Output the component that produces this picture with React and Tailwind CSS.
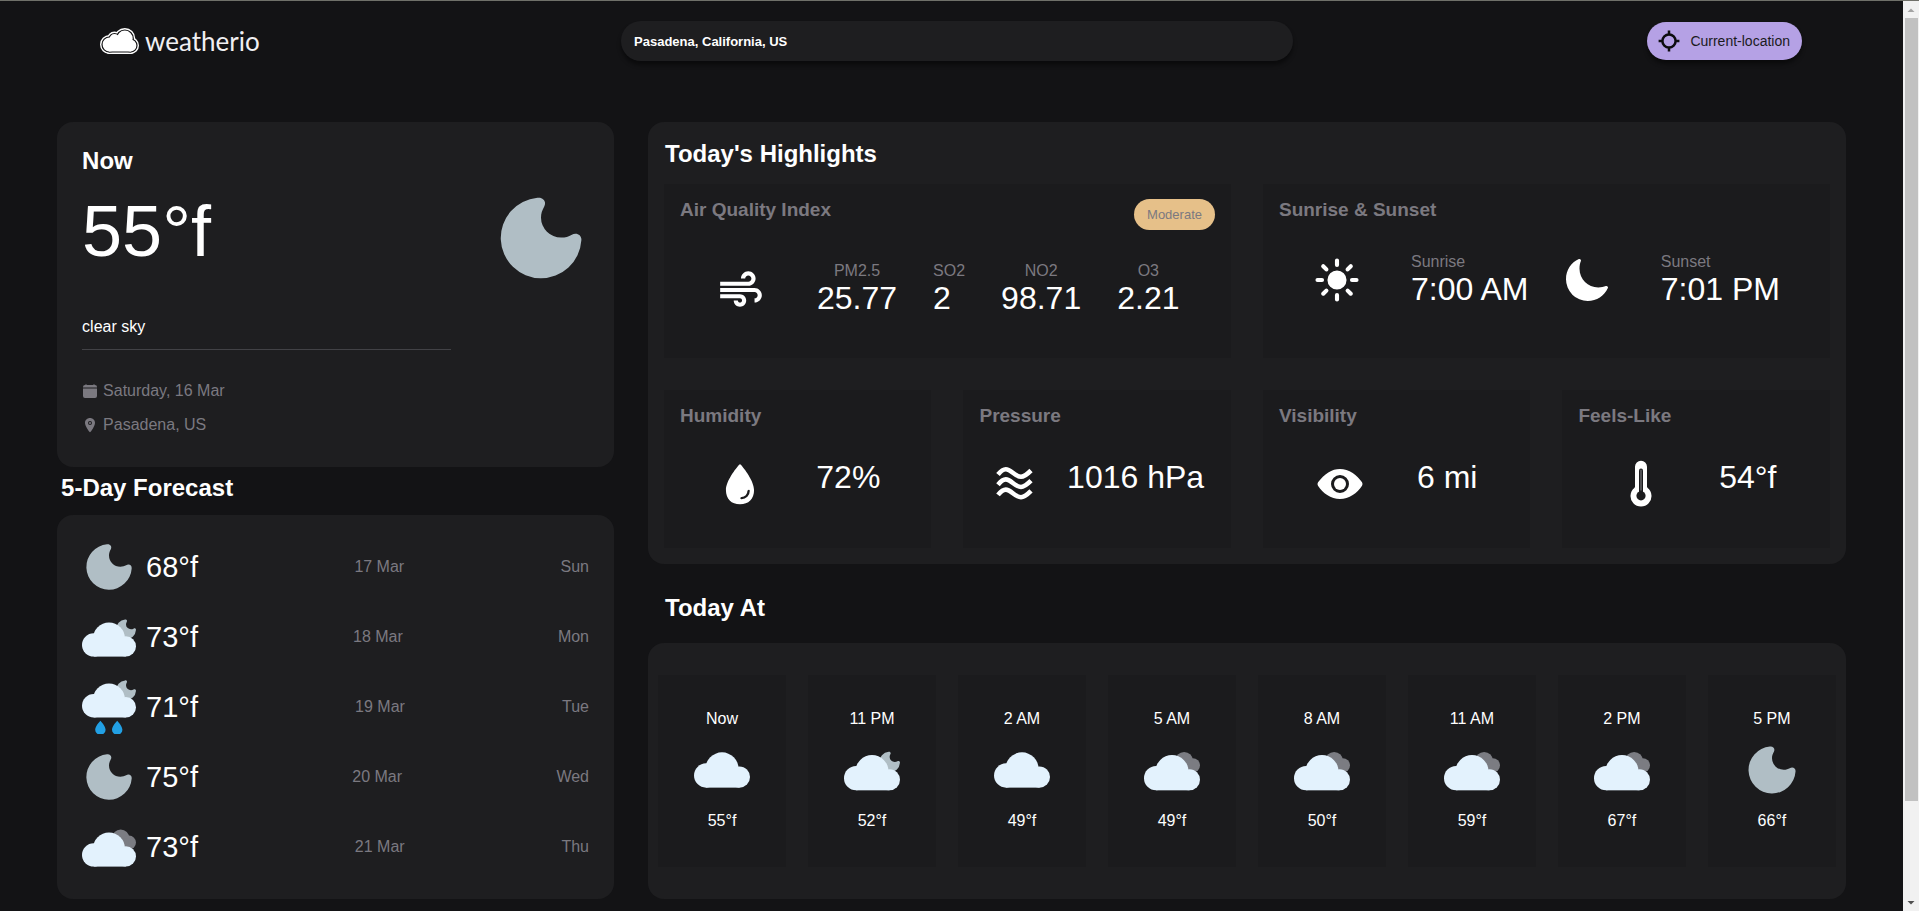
import React, { useState } from 'react';
import { IoCalendarClear, IoEye, IoLocation, IoMoon, IoSunny, IoWater } from 'react-icons/io5';
import { MdAir } from 'react-icons/md';

const forecast = [
  { icon: 'moon', temp: '68°f', date: '17 Mar', day: 'Sun' },
  { icon: 'cloudMoon', temp: '73°f', date: '18 Mar', day: 'Mon' },
  { icon: 'rainMoon', temp: '71°f', date: '19 Mar', day: 'Tue' },
  { icon: 'moon', temp: '75°f', date: '20 Mar', day: 'Wed' },
  { icon: 'clouds', temp: '73°f', date: '21 Mar', day: 'Thu' },
];

const hourly = [
  { time: 'Now', icon: 'cloud', temp: '55°f' },
  { time: '11 PM', icon: 'cloudMoon', temp: '52°f' },
  { time: '2 AM', icon: 'cloud', temp: '49°f' },
  { time: '5 AM', icon: 'clouds', temp: '49°f' },
  { time: '8 AM', icon: 'clouds', temp: '50°f' },
  { time: '11 AM', icon: 'clouds', temp: '59°f' },
  { time: '2 PM', icon: 'clouds', temp: '67°f' },
  { time: '5 PM', icon: 'moon', temp: '66°f' },
];

const MoonShape = ({ transform }) => (
  <path
    transform={transform}
    fill="#b0bec5"
    d="M36.5 .3C42-.5 45.8 4 43.2 9C41 13 40 16 40 20A19.8 19.8 0 0 0 59.8 39.6C64 39.6 67.5 38.5 70 37C75 34 80.5 37 79.8 42.5A39.8 39.8 0 1 1 36.5 .3Z"
  />
);

const CloudShape = () => (
  <g fill="#e3f2fd">
    <circle cx="11.7" cy="22.3" r="11.7" />
    <circle cx="27" cy="16" r="16" />
    <circle cx="43.8" cy="23.8" r="10.2" />
    <rect x="11.7" y="16" width="32.1" height="18" />
  </g>
);

const GreyCloudShape = () => (
  <g fill="#7b7c82">
    <circle cx="38.7" cy="5.6" r="8.6" />
    <circle cx="47" cy="10" r="7" />
    <rect x="38.7" y="5.6" width="8" height="10" />
  </g>
);

const WeatherIcon = ({ name, className }) => (
  <svg viewBox="0 0 54 54" className={className} aria-hidden="true">
    {name === 'moon' && <MoonShape transform="translate(4.2 4.2) scale(.57)" />}
    {name === 'cloud' && (
      <g transform="translate(0 10)">
        <CloudShape />
      </g>
    )}
    {name === 'clouds' && (
      <g transform="translate(0 12.6)">
        <GreyCloudShape />
        <CloudShape />
      </g>
    )}
    {name === 'cloudMoon' && (
      <g transform="translate(0 12.6)">
        <MoonShape transform="translate(34 -3.2) scale(.25)" />
        <CloudShape />
      </g>
    )}
    {name === 'rainMoon' && (
      <g transform="translate(0 3.5)">
        <MoonShape transform="translate(34 -3.2) scale(.25)" />
        <CloudShape />
        <path
          fill="#22a0e4"
          d="M18.4 37.2C20.5 39.5 23.6 43.4 23.6 46.2A5.2 5 0 0 1 13.2 46.2C13.2 43.4 16.3 39.5 18.4 37.2ZM35.2 37.2C37.3 39.5 40.4 43.4 40.4 46.2A5.2 5 0 0 1 30 46.2C30 43.4 33.1 39.5 35.2 37.2Z"
        />
      </g>
    )}
  </svg>
);

const LogoShape = (props) => (
  <g strokeLinejoin="round" {...props}>
    <circle cx="9.5" cy="16.5" r="6" />
    <circle cx="14.5" cy="11" r="4" />
    <circle cx="24.8" cy="10.5" r="7" />
    <circle cx="30.5" cy="17.5" r="5" />
    <rect x="9.5" y="12" width="21" height="10.5" />
  </g>
);

const Logo = () => (
  <a href="/" className="flex items-center gap-[6px] pr-[7px]">
    <svg viewBox="0 0 39 26" className="h-[26px] w-[39px]" aria-hidden="true">
      <LogoShape fill="#fff" stroke="#fff" strokeWidth="7" />
      <LogoShape fill="#131315" stroke="#131315" strokeWidth="4.2" />
      <LogoShape fill="#fff" stroke="#fff" strokeWidth="1.8" />
    </svg>
    <span className="font-['Lato',sans-serif] text-[26px] leading-8 text-[#f0eff2]">weatherio</span>
  </a>
);

const TargetIcon = () => (
  <svg viewBox="0 0 24 24" className="size-6" fill="none" stroke="#0d0d0f" strokeWidth="2.5" aria-hidden="true">
    <circle cx="12" cy="12" r="6.6" />
    <path d="M12 1.6V5.4M12 18.6V22.4M1.6 12H5.4M18.6 12H22.4" />
  </svg>
);

const WavesIcon = () => (
  <svg viewBox="0 0 50 50" className="size-[50px]" fill="none" stroke="#fff" strokeWidth="4.6" aria-hidden="true">
    <path d="M8 15.5C11 11.8 13 10.2 15.8 10.2C21 10.2 25 17.8 31 17.8C34.5 17.8 37 15.5 41 11.5" />
    <path d="M8 25.7C11 22 13 20.4 15.8 20.4C21 20.4 25 28 31 28C34.5 28 37 25.7 41 21.7" />
    <path d="M8 35.9C11 32.2 13 30.6 15.8 30.6C21 30.6 25 38.2 31 38.2C34.5 38.2 37 35.9 41 31.9" />
  </svg>
);

const ThermometerIcon = () => (
  <svg viewBox="0 0 50 50" className="size-[50px]" aria-hidden="true">
    <path
      fill="#fff"
      d="M25 1.8A6 6 0 0 1 31 7.8V27.6C31 28.2 31.2 28.6 31.7 29A10.5 10.5 0 1 1 18.3 29C18.8 28.6 19 28.2 19 27.6V7.8A6 6 0 0 1 25 1.8Z"
    />
    <path d="M25 11.5V36.8" stroke="#1b1b1d" strokeWidth="4" strokeLinecap="round" />
    <path d="M25 11V31" stroke="#77777b" strokeWidth="1.2" strokeLinecap="round" />
    <circle cx="25" cy="36.8" r="4.6" fill="#1b1b1d" />
  </svg>
);

const Tile = ({ title, badge, className = '', children }) => (
  <div className={`bg-[#1b1b1d] pt-[15px] ${className}`}>
    <div className="mb-8 flex items-start justify-between px-4">
      <h3 className="text-[19px] leading-[22px] font-bold text-[#7b7980]">{title}</h3>
      {badge}
    </div>
    {children}
  </div>
);

const SmallTile = ({ title, icon, value }) => (
  <Tile title={title} className="pb-[39px]">
    <div className="flex items-start justify-evenly">
      {icon}
      <p className="text-[32px] leading-[37px]">{value}</p>
    </div>
  </Tile>
);

const Reading = ({ label, value, center }) => (
  <div>
    <p className={`text-base leading-[18px] text-[#7b7980] ${center ? 'text-center' : ''}`}>{label}</p>
    <p className="text-[32px] leading-[37px]">{value}</p>
  </div>
);

const Header = () => {
  const [search, setSearch] = useState('Pasadena, California, US');

  return (
    <header className="flex items-center justify-between pt-5 pr-[101px] pl-[100px]">
      <Logo />
      <input
        type="text"
        aria-label="Search city"
        value={search}
        onChange={(e) => setSearch(e.target.value)}
        className="h-10 w-[672px] rounded-full bg-[#1e1e20] px-[13px] text-[13px] font-bold text-white shadow-[0_4px_4px_rgba(0,0,0,0.45)] outline-none"
      />
      <button
        type="button"
        className="flex h-[38px] items-center gap-[9px] rounded-full bg-[#b5a1e5] pr-3 pl-[10px] text-sm text-[#1b1b1d] shadow-[0_4px_4px_rgba(0,0,0,0.45)]"
      >
        <TargetIcon />
        Current-location
      </button>
    </header>
  );
};

const CurrentWeather = () => (
  <section className="rounded-2xl bg-[#1e1e20] px-[25px] pt-[25px] pb-[33px]">
    <h2 className="mb-[15px] text-2xl leading-7 font-bold">Now</h2>
    <div className="flex items-start justify-between">
      <p className="text-[72px] leading-[83px]">55°f</p>
      <WeatherIcon name="moon" className="size-24" />
    </div>
    <p className="mt-8 text-base leading-[18px]">clear sky</p>
    <hr className="mt-[13px] mb-8 w-8/11 border-[#424246]" />
    <div className="flex flex-col gap-4 text-base leading-[18px] text-[#7b7980]">
      <p className="flex items-center gap-[5px]">
        <IoCalendarClear size={16} />
        Saturday, 16 Mar
      </p>
      <p className="flex items-center gap-[5px]">
        <IoLocation size={16} />
        Pasadena, US
      </p>
    </div>
  </section>
);

const Forecast = () => (
  <section>
    <h2 className="mt-[7px] mb-[13px] pl-1 text-2xl leading-7 font-bold">5-Day Forecast</h2>
    <ul className="flex flex-col gap-4 rounded-2xl bg-[#1e1e20] p-[25px]">
      {forecast.map((item) => (
        <li key={item.date} className="flex items-center justify-between text-base text-[#7b7980]">
          <div className="flex items-center gap-[10px]">
            <WeatherIcon name={item.icon} className="size-[54px]" />
            <span className="text-[29px] leading-8 text-white">{item.temp}</span>
          </div>
          <span>{item.date}</span>
          <span>{item.day}</span>
        </li>
      ))}
    </ul>
  </section>
);

const Highlights = () => (
  <section className="rounded-2xl bg-[#1e1e20] px-4 pt-[18px] pb-4">
    <h2 className="mb-4 pl-px text-2xl leading-7 font-bold">Today's Highlights</h2>
    <div className="grid grid-cols-4 gap-8">
      <Tile
        title="Air Quality Index"
        className="col-span-2 pb-[41px]"
        badge={
          <span className="rounded-2xl bg-[#e6c089] px-[13px] py-2 text-[13px] leading-[15px] text-[#7b7980]">
            Moderate
          </span>
        }
      >
        <div className="flex items-start justify-evenly">
          <MdAir size={50} className="mt-[3px]" />
          <div className="flex gap-9">
            <Reading center label="PM2.5" value="25.77" />
            <Reading center label="SO2" value="2" />
            <Reading center label="NO2" value="98.71" />
            <Reading center label="O3" value="2.21" />
          </div>
        </div>
      </Tile>

      <Tile title="Sunrise & Sunset" className="col-span-2 pb-[41px]">
        <div className="flex items-start justify-between px-[50px]">
          <div className="flex gap-[50px]">
            <IoSunny size={48} className="mt-[3px]" />
            <Reading label="Sunrise" value="7:00 AM" />
          </div>
          <div className="flex gap-[50px]">
            <IoMoon size={48} className="mt-[3px]" />
            <Reading label="Sunset" value="7:01 PM" />
          </div>
        </div>
      </Tile>

      <SmallTile title="Humidity" icon={<IoWater size={50} />} value="72%" />
      <SmallTile title="Pressure" icon={<WavesIcon />} value="1016 hPa" />
      <SmallTile title="Visibility" icon={<IoEye size={48} className="mt-px" />} value="6 mi" />
      <SmallTile title="Feels-Like" icon={<ThermometerIcon />} value="54°f" />
    </div>
  </section>
);

const TodayAt = () => (
  <section>
    <h2 className="mt-[30px] mb-[21px] pl-[17px] text-2xl leading-7 font-bold">Today At</h2>
    <div className="grid grid-cols-8 gap-[22px] rounded-2xl bg-[#1e1e20] px-[10px] py-8">
      {hourly.map((item) => (
        <div
          key={item.time}
          className="flex flex-col items-center gap-[14px] bg-[#1b1b1d] pt-[35px] pb-[37px] text-base leading-[18px]"
        >
          <p>{item.time}</p>
          <WeatherIcon name={item.icon} className="size-14" />
          <p>{item.temp}</p>
        </div>
      ))}
    </div>
  </section>
);

// Light scroll track on the right edge
const ScrollTrack = () => (
  <div className="flex w-4 shrink-0 flex-col items-center bg-[#f1f1f1]">
    <svg viewBox="0 0 16 17" className="h-[17px] w-4" aria-hidden="true">
      <path d="M4.5 11L8 7.5L11.5 11Z" fill="#a3a3a3" />
    </svg>
    <div className="ml-px w-[13px] flex-[42] bg-[#c1c1c1]" />
    <div className="flex-[5]" />
    <svg viewBox="0 0 16 17" className="h-[17px] w-4" aria-hidden="true">
      <path d="M4.5 7L8 10.5L11.5 7Z" fill="#505050" />
    </svg>
  </div>
);

const App = () => {
  return (
    <div className="flex min-h-screen border-t border-[#6f7069] bg-[#131315] font-['Liberation_Sans',Arial,sans-serif] text-white">
      <div className="min-w-0 flex-1">
        <Header />
        <main className="mx-[3%] mt-[61px] grid grid-cols-[557fr_1198fr] gap-[34px]">
          <div>
            <CurrentWeather />
            <Forecast />
          </div>
          <div>
            <Highlights />
            <TodayAt />
          </div>
        </main>
      </div>
      <ScrollTrack />
    </div>
  );
};

export default App;
